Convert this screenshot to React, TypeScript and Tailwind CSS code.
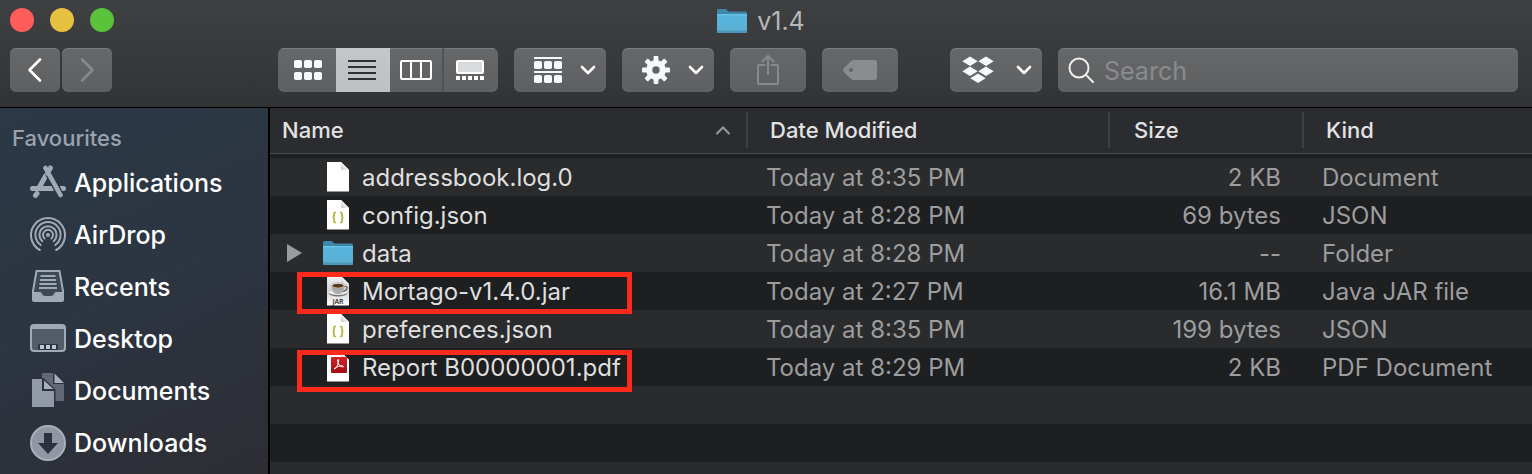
import React from "react";

type IconName = "page" | "json" | "folder" | "jar" | "pdf";

interface FileEntry {
  name: string;
  icon: IconName;
  date: string;
  size: string;
  kind: string;
  expandable?: boolean;
  mark?: "flush" | "lowered";
}

const files: FileEntry[] = [
  { name: "addressbook.log.0", icon: "page", date: "Today at 8:35 PM", size: "2 KB", kind: "Document" },
  { name: "config.json", icon: "json", date: "Today at 8:28 PM", size: "69 bytes", kind: "JSON" },
  { name: "data", icon: "folder", date: "Today at 8:28 PM", size: "--", kind: "Folder", expandable: true },
  { name: "Mortago-v1.4.0.jar", icon: "jar", date: "Today at 2:27 PM", size: "16.1 MB", kind: "Java JAR file", mark: "flush" },
  { name: "preferences.json", icon: "json", date: "Today at 8:35 PM", size: "199 bytes", kind: "JSON" },
  { name: "Report B00000001.pdf", icon: "pdf", date: "Today at 8:29 PM", size: "2 KB", kind: "PDF Document", mark: "lowered" },
];

function FolderIcon() {
  return (
    <svg width="30" height="24" viewBox="0 0 30 24" aria-hidden="true">
      <defs>
        <linearGradient id="folderFront" x1="0" y1="0" x2="0" y2="1">
          <stop offset="0" stopColor="#6fc4e8" />
          <stop offset="0.12" stopColor="#58b3dc" />
          <stop offset="1" stopColor="#5baed2" />
        </linearGradient>
      </defs>
      <path d="M0 1.5Q0 0 1.5 0H8q1 0 1.800.900l1 1.100q.500.500 1.200.500h16.500Q30 2.500 30 4v3H0z" fill="#3f87a9" />
      <path d="M0 5h30v17.500q0 1.500-1.500 1.500h-27Q0 24 0 22.500z" fill="url(#folderFront)" />
      <path d="M0 21.500h30v1q0 1.500-1.500 1.500h-27Q0 24 0 22.500z" fill="#4a95b8" />
    </svg>
  );
}

function PageIcon({ kind }: { kind: IconName }) {
  return (
    <svg width="24" height="30" viewBox="0 0 24 30" aria-hidden="true">
      <defs>
        <linearGradient id="fold" x1="0" y1="1" x2="1" y2="0">
          <stop offset="0" stopColor="#c4c4c4" />
          <stop offset="0.6" stopColor="#ffffff" />
        </linearGradient>
        <linearGradient id="jarPaper" x1="0" y1="0" x2="0" y2="1">
          <stop offset="0" stopColor="#f4f4f4" />
          <stop offset="0.5" stopColor="#d2d2d2" />
          <stop offset="1" stopColor="#ffffff" />
        </linearGradient>
        <linearGradient id="pdfRed" x1="0" y1="0" x2="0" y2="1">
          <stop offset="0" stopColor="#d3222a" />
          <stop offset="1" stopColor="#a50d14" />
        </linearGradient>
      </defs>
      <path d="M1 0H15L23 8V29.500H1z" fill={kind === "jar" ? "url(#jarPaper)" : "#ffffff"} />
      <path d="M15 0v7q0 1 1 1h7z" fill="url(#fold)" />
      {kind === "json" && (
        <g fill="none" stroke="#b5b43a" strokeWidth="1.7">
          <path d="M10 12.500H9q-1 0-1 1v2.500q0 1.500-1.500 1.500Q8 17.500 8 19v2.500q0 1 1 1h1" />
          <path d="M14 12.500h1q1 0 1 1v2.500q0 1.500 1.500 1.500Q16 17.500 16 19v2.500q0 1-1 1h-1" />
        </g>
      )}
      {kind === "jar" && (
        <g>
          <ellipse cx="12" cy="17.500" rx="9" ry="3" fill="#777" />
          <ellipse cx="12" cy="16.500" rx="9" ry="2.600" fill="#ececec" />
          <path d="M18 10.500q4-.500 3 2T16.500 15.500" fill="none" stroke="#666" strokeWidth="1.300" />
          <path d="M5.500 9.500h13q0 7.500-5 8.500h-3q-5-1-5-8.500z" fill="#aaa" />
          <ellipse cx="12" cy="9.500" rx="7" ry="2.800" fill="#f7f7f7" stroke="#888" strokeWidth=".5" />
          <ellipse cx="12" cy="9.700" rx="5.800" ry="2" fill="#5b3717" />
          <text x="12" y="28" textAnchor="middle" fontFamily="Open Sans, sans-serif" fontSize="7" fontWeight="600" fill="#222">
            JAR
          </text>
        </g>
      )}
      {kind === "pdf" && (
        <g>
          <rect x="5" y="5" width="16" height="16" rx="1" fill="url(#pdfRed)" />
          <path
            d="M8 17c3-1.500 5-5.500 4.500-9.500-1.200-.4-1.200 2 0 4.500 1.200 2 3.500 3.200 5 2.800.5-1.800-5-1.500-9.500 2.200z"
            fill="none"
            stroke="#fff"
            strokeWidth="1"
            strokeLinejoin="round"
          />
        </g>
      )}
    </svg>
  );
}

function Chevron({ dim = false, flip = false }: { dim?: boolean; flip?: boolean }) {
  return (
    <svg width="16" height="26" viewBox="0 0 16 26" fill="none" aria-hidden="true">
      <path
        d={flip ? "M3 2.500 13.500 13 3 23.500" : "M13 2.500 2.500 13 13 23.500"}
        stroke={dim ? "#88898b" : "#ffffff"}
        strokeWidth="2.600"
        strokeLinecap="round"
        strokeLinejoin="round"
      />
    </svg>
  );
}

function DownChevron() {
  return (
    <svg width="16" height="10" viewBox="0 0 16 10" fill="none" aria-hidden="true">
      <path d="M2 2l6 6 6-6" stroke="#fff" strokeWidth="2.600" strokeLinecap="round" strokeLinejoin="round" />
    </svg>
  );
}

const gridColumns = [0, 10, 20];
const gearAngles = [0, 45, 90, 135, 180, 225, 270, 315];

function GridIcon() {
  return (
    <svg width="28" height="20" viewBox="0 0 28 20" fill="#f7f8fa" aria-hidden="true">
      {gridColumns.map((x) => (
        <g key={x}>
          <rect x={x} y="0" width="8" height="8" rx="1.800" />
          <rect x={x} y="12" width="8" height="8" rx="1.800" />
        </g>
      ))}
    </svg>
  );
}

function ListIcon() {
  return (
    <svg width="28" height="20" viewBox="0 0 28 20" fill="#303133" aria-hidden="true">
      <path d="M0 0h28v2H0zM0 6h28v2H0zM0 12h28v2H0zM0 18h28v2H0z" />
    </svg>
  );
}

function ColumnsIcon() {
  return (
    <svg width="32" height="20" viewBox="0 0 32 20" fill="none" stroke="#fff" strokeWidth="2" aria-hidden="true">
      <rect x="1" y="1" width="30" height="18" rx="1" />
      <path d="M11 1v18M21 1v18" />
    </svg>
  );
}

function GalleryIcon() {
  return (
    <svg width="28" height="20" viewBox="0 0 28 20" aria-hidden="true">
      <rect x="1" y="1" width="26" height="12" rx="1" fill="#d9dadc" stroke="#fff" strokeWidth="2" />
      <path d="M0 16h4v4H0zM6 16h4v4H6zM12 16h4v4h-4zM18 16h4v4h-4zM24 16h4v4h-4z" fill="#fff" />
    </svg>
  );
}

function ArrangeIcon() {
  return (
    <svg width="28" height="26" viewBox="0 0 28 26" fill="#f7f8fa" aria-hidden="true">
      <path d="M0 0h28v2H0zM0 14h28v2H0z" />
      {gridColumns.map((x) => (
        <g key={x}>
          <rect x={x} y="4" width="8" height="8" rx="1.800" />
          <rect x={x} y="18" width="8" height="8" rx="1.800" />
        </g>
      ))}
    </svg>
  );
}

function GearIcon() {
  return (
    <svg width="28" height="28" viewBox="-14 -14 28 28" fill="#f7f8fa" aria-hidden="true">
      <circle r="6.800" fill="none" stroke="#f7f8fa" strokeWidth="6.200" />
      {gearAngles.map((angle) => (
        <rect key={angle} x="-2.400" y="-14" width="4.800" height="6" rx="1" transform={`rotate(${angle})`} />
      ))}
    </svg>
  );
}

function ShareIcon() {
  return (
    <svg width="22" height="30" viewBox="0 0 22 30" fill="none" stroke="#88898b" strokeWidth="2" aria-hidden="true">
      <path d="M7.500 10H2q-1 0-1 1v17q0 1 1 1h18q1 0 1-1V11q0-1-1-1h-5.500M11 19V1M5.500 6.500 11 1l5.500 5.500" strokeLinejoin="round" strokeLinecap="round" />
    </svg>
  );
}

function TagIcon() {
  return (
    <svg width="34" height="20" viewBox="0 0 34 20" aria-hidden="true">
      <path
        fillRule="evenodd"
        d="M11 0h20q3 0 3 3v14q0 3-3 3H11q-2 0-3.500-1.500L1 12Q-1 10 1 8l6.500-6.500Q9 0 11 0zM8 8a2 2 0 100 4 2 2 0 000-4z"
        fill="#8b8c8e"
      />
    </svg>
  );
}

function BoxIcon() {
  return (
    <svg width="32" height="28" viewBox="0 0 32 28" fill="#f7f8fa" aria-hidden="true">
      <path d="M8 .5 15.700 5.300 8 10.100.3 5.300zM24 .5l7.700 4.800-7.700 4.800-7.700-4.800zM8 10.500l7.700 4.800L8 20.100.3 15.300zM24 10.500l7.700 4.800-7.700 4.800-7.700-4.800zM16 17.500l7.700 4.800L16 27.100 8.300 22.300z" />
    </svg>
  );
}

function SearchIcon() {
  return (
    <svg width="26" height="26" viewBox="0 0 26 26" fill="none" stroke="#eeeeef" strokeWidth="2" strokeLinecap="round" aria-hidden="true">
      <circle cx="11" cy="11" r="9.500" />
      <path d="M18 18l7 7" />
    </svg>
  );
}

const sideIcons = {
  Applications: (
    <svg width="36" height="36" viewBox="0 1 36 36" fill="none" stroke="#a0aab7" strokeLinecap="round" aria-hidden="true">
      <path d="M2.500 24.500h20M31 24.500h2.500" strokeWidth="5" />
      <path d="M20 4 9.500 23M7 29.500 5.500 31.500" strokeWidth="5" />
      <path d="M15.500 4 30.500 31" stroke="#2c3744" strokeWidth="7" strokeLinecap="butt" />
      <path d="M15.500 4 30.500 31" strokeWidth="4.600" />
      <path d="M20.500 4 17.500 9.500" strokeWidth="4.600" />
    </svg>
  ),
  AirDrop: (
    <svg width="36" height="36" viewBox="0 0 36 36" fill="none" stroke="#a0aab7" strokeWidth="2" strokeLinecap="round" aria-hidden="true">
      <path d="M9.800 33A17 17 0 1126.200 33" />
      <path d="M10.800 28A12.600 12.600 0 1125.200 28" />
      <path d="M12.300 24.200A8.600 8.600 0 1123.700 24.200" />
      <path d="M14.600 21.500A5 5 0 1121.400 21.500" />
      <circle cx="18" cy="18" r="2" fill="#a0aab7" stroke="none" />
    </svg>
  ),
  Recents: (
    <svg width="36" height="36" viewBox="0 1 36 36" aria-hidden="true">
      <path d="M6.500 3h23l3.500 20v9q0 1-1 1H4q-1 0-1-1v-9z" fill="#3d4855" stroke="#a0aab7" strokeWidth="2" strokeLinejoin="round" />
      <path d="M10.500 8h15M10 12h16M9.500 16h17M9 20h18" stroke="#a0aab7" strokeWidth="2" />
      <path d="M3 24h7q1 0 1.500 1l.5 1q1 2 3 2h6q2 0 3-2l.5-1q.500-1 1.500-1h7v8q0 1-1 1H4q-1 0-1-1z" fill="#a0aab7" />
    </svg>
  ),
  Desktop: (
    <svg width="36" height="36" viewBox="0 1 36 36" aria-hidden="true">
      <rect x="1" y="5" width="34" height="26" rx="3" fill="#535d69" stroke="#a0aab7" strokeWidth="2" />
      <path d="M1 9V7q0-2 2-2h30q2 0 2 2v2z" fill="#a0aab7" />
      <path d="M8 25q0-1 1-1h18q1 0 1 1v5H8z" fill="#2c3541" />
      <path d="M10 25h4v4h-4zM16 25h4v4h-4zM22 25h4v4h-4z" fill="#c0c7d0" />
    </svg>
  ),
  Documents: (
    <svg width="36" height="36" viewBox="0 1 36 36" aria-hidden="true">
      <path d="M12 1h11v11h11v17H12z" fill="#626974" />
      <path d="M24.500 1.500 34 11h-9.500z" fill="#a7afba" />
      <path d="M1 6h12.500L25.500 17.500V36H1z" fill="#2c323d" />
      <path d="M2 7h10v12h12v16H2z" fill="#939ba6" />
      <path d="M14 8.500 23.500 17H14z" fill="#a7afba" />
    </svg>
  ),
  Downloads: (
    <svg width="36" height="36" viewBox="0 0 36 36" aria-hidden="true">
      <circle cx="18" cy="18" r="17" fill="#8e97a2" stroke="#a9b0ba" strokeWidth="2" />
      <path d="M14 8h8v10h6L18 29 8 18h6z" fill="#2c323c" />
    </svg>
  ),
};

const places = Object.keys(sideIcons) as (keyof typeof sideIcons)[];

const buttonFace = "flex h-11 items-center bg-linear-to-b from-[#666769] to-[#5f6062] shadow-[inset_0_1px_0_#7a7b7d]";

function Toolbar() {
  return (
    <header className="relative border-b border-black bg-linear-to-b from-[#3f4042] to-[#323335] pb-[15px]">
      <div className="flex h-12 items-start pt-2">
        <div className="absolute flex gap-4 pl-[10px]">
          <button aria-label="Close" className="size-6 rounded-full bg-[#fe5d59]" />
          <button aria-label="Minimise" className="size-6 rounded-full bg-[#e6c03f]" />
          <button aria-label="Zoom" className="size-6 rounded-full bg-[#5ac23b]" />
        </div>
        <h1 className="mx-auto flex items-center gap-[10px] pr-[10px] text-[25px] leading-[26px] text-[#b6b7b8]">
          <FolderIcon />
          v1.4
        </h1>
      </div>
      <div className="flex gap-4 pr-[14px] pl-[10px]">
        <div className="mr-[150px] flex gap-[2px]">
          <button aria-label="Back" className={`${buttonFace} w-[50px] justify-center rounded-md`}>
            <Chevron />
          </button>
          <button aria-label="Forward" className={`${buttonFace} w-[50px] justify-center rounded-md`}>
            <Chevron dim flip />
          </button>
        </div>
        <div className="flex shrink-0 overflow-hidden rounded-md">
          <button aria-label="Icon view" className={`${buttonFace} w-[58px] justify-center pl-[2px]`}>
            <GridIcon />
          </button>
          <button aria-label="List view" aria-pressed="true" className="flex h-11 w-[54px] items-center justify-center bg-linear-to-b from-[#c5c6c8] to-[#bfc0c2] pr-[2px]">
            <ListIcon />
          </button>
          <button aria-label="Column view" className={`${buttonFace} w-[54px] justify-center border-r-2 border-[#525355]`}>
            <ColumnsIcon />
          </button>
          <button aria-label="Gallery view" className={`${buttonFace} w-[54px] justify-center pr-[2px]`}>
            <GalleryIcon />
          </button>
        </div>
        <button aria-label="Arrange" className={`${buttonFace} w-[92px] shrink-0 justify-between rounded-md pr-[10px] pl-5`}>
          <ArrangeIcon />
          <DownChevron />
        </button>
        <button aria-label="Actions" className={`${buttonFace} w-[92px] shrink-0 justify-between rounded-md pr-[10px] pl-5`}>
          <GearIcon />
          <DownChevron />
        </button>
        <button aria-label="Share" className={`${buttonFace} w-[76px] shrink-0 justify-center rounded-md`}>
          <ShareIcon />
        </button>
        <button aria-label="Edit tags" className={`${buttonFace} mr-9 w-[76px] shrink-0 justify-center rounded-md`}>
          <TagIcon />
        </button>
        <button aria-label="Dropbox" className={`${buttonFace} w-[92px] shrink-0 justify-between rounded-md pr-[10px] pl-3`}>
          <BoxIcon />
          <DownChevron />
        </button>
        <label className={`${buttonFace} min-w-0 flex-1 gap-[10px] rounded-md pl-[10px]`}>
          <SearchIcon />
          <input
            type="search"
            aria-label="Search"
            placeholder="Search"
            className="h-full min-w-0 flex-1 bg-transparent pt-[2px] text-[25px] text-white outline-none placeholder:text-[#8a8b8d]"
          />
        </label>
      </div>
    </header>
  );
}

function Sidebar() {
  return (
    <nav aria-label="Favourites" className="w-[270px] shrink-0 border-r-2 border-black bg-linear-155 from-[#2b3846] via-[#2c3541] to-[#2d2d34] pt-3">
      <h2 className="flex h-9 items-center pl-3 text-[22px] font-medium text-[#9aa3af]">Favourites</h2>
      <ul className="pt-px">
        {places.map((place) => (
          <li key={place}>
            <a href="#" className="flex h-[52px] items-center gap-2 pl-[30px] text-[25px] font-medium text-white">
              {sideIcons[place]}
              <span className="pt-[2px]">{place}</span>
            </a>
          </li>
        ))}
      </ul>
    </nav>
  );
}

function HeaderCell({ label, className, children }: { label: string; className: string; children?: React.ReactNode }) {
  return (
    <th scope="col" className="p-0 pb-1 text-left font-medium">
      <div className="flex h-[46px] items-start border-b border-[#4d4e51] bg-[#2b2c2f] pt-1">
        <div className={`flex h-9 flex-1 items-center justify-between ${className}`}>
          {label}
          {children}
        </div>
      </div>
    </th>
  );
}

function FileRow({ file }: { file: FileEntry }) {
  return (
    <tr className="h-[38px] odd:bg-[#2a2b2d] even:bg-[#1e1f21]">
      <td className="relative p-0 text-[#dfdfdf]">
        <div className="flex h-[38px] items-center pl-[17px]">
          <span className="w-[35px]">
            {file.expandable && (
              <button aria-label="Expand" className="block">
                <svg width="15" height="18" viewBox="0 0 15 18" fill="#9b9c9d" aria-hidden="true">
                  <path d="M0 0l15 9-15 9z" />
                </svg>
              </button>
            )}
          </span>
          <span className="mr-2 flex w-8 justify-center">
            {file.icon === "folder" ? <FolderIcon /> : <PageIcon kind={file.icon} />}
          </span>
          <span className="pt-[2px]">{file.name}</span>
        </div>
        {file.mark && (
          <div
            className={`pointer-events-none absolute left-[27px] z-10 h-[42px] w-[335px] border-[5px] border-[#fc2a1c] ${
              file.mark === "flush" ? "top-0" : "top-[2px]"
            }`}
          />
        )}
      </td>
      <td className="p-0 pt-[2px] pl-[18px] text-[#9c9d9e]">{file.date}</td>
      <td className="p-0 pt-[2px] pr-[23px] text-right text-[#9c9d9e]">{file.size}</td>
      <td className="p-0 pt-[2px] pl-[18px] text-[#9c9d9e]">{file.kind}</td>
    </tr>
  );
}

export default function App() {
  return (
    <div className="flex min-h-screen flex-col bg-[#1e1f21] font-['Inter',sans-serif]">
      <Toolbar />
      <div className="flex flex-1">
        <Sidebar />
        <main className="flex min-w-0 flex-1 flex-col">
          <table className="w-full table-fixed border-collapse text-2xl leading-8 whitespace-nowrap">
            <colgroup>
              <col className="w-[478px]" />
              <col className="w-[362px]" />
              <col className="w-[194px]" />
              <col />
            </colgroup>
            <thead className="text-[22px] text-[#e2e2e2]">
              <tr>
                <HeaderCell label="Name" className="border-r-2 border-[#3f4043] pr-4 pl-3">
                  <svg width="14" height="10" viewBox="0 0 14 10" fill="none" aria-hidden="true">
                    <path d="M1 8.500l6-6 6 6" stroke="#98999b" strokeWidth="2" strokeLinecap="round" />
                  </svg>
                </HeaderCell>
                <HeaderCell label="Date Modified" className="border-r-2 border-[#3f4043] pl-[22px]" />
                <HeaderCell label="Size" className="border-r-2 border-[#3f4043] pl-6" />
                <HeaderCell label="Kind" className="pl-[22px]" />
              </tr>
            </thead>
            <tbody>
              {files.map((file) => (
                <FileRow key={file.name} file={file} />
              ))}
            </tbody>
          </table>
          <div className="flex-1 bg-[repeating-linear-gradient(to_bottom,#2a2b2d_0_38px,#1e1f21_38px_76px)]" />
        </main>
      </div>
    </div>
  );
}
